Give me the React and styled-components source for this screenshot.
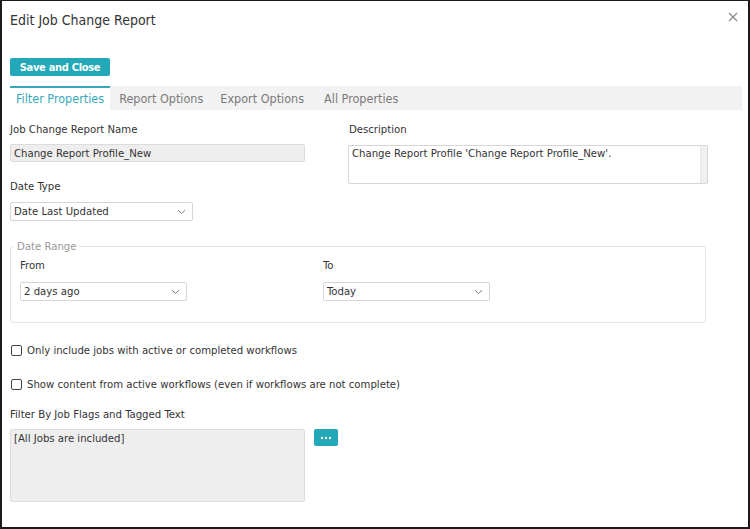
import React from "react";
import styled, { createGlobalStyle } from "styled-components";

const Global = createGlobalStyle`
  html, body { margin: 0; padding: 0; background: #fff; }
  * { box-sizing: border-box; }
  body { font-family: "DejaVu Sans", Tahoma, sans-serif; font-stretch: condensed; }
`;

const Frame = styled.div`
  width: 750px;
  height: 529px;
  border: 2px solid #1b1b1b;
  border-top-width: 1px;
  background: #fff;
  color: #333;
  font-size: 11.25px;
  padding: 0 6px 0 8px;
  display: flex;
  flex-direction: column;
`;

const Header = styled.div`
  display: flex;
  align-items: center;
  justify-content: space-between;
  height: 38px;
`;

const Title = styled.h1`
  margin: 0;
  font-weight: normal;
  font-size: 14px;
  color: #333;
`;

const Close = styled.button`
  border: 0;
  background: none;
  padding: 0;
  margin-right: 4px;
  margin-top: -6px;
  cursor: pointer;
  display: flex;
`;

const TealButton = styled.button`
  border: 0;
  border-radius: 2px;
  background: #22a8b8;
  color: #fff;
  font-family: inherit;
  font-stretch: condensed;
  font-weight: bold;
  font-size: 11px;
  letter-spacing: -0.3px;
  height: ${(p) => p.$h || 18}px;
  width: ${(p) => p.$w}px;
  padding: 0;
  display: flex;
  align-items: center;
  justify-content: center;
`;

const Toolbar = styled.div`
  margin-top: 19px;
  display: flex;
`;

const Tabs = styled.div`
  margin-top: 10px;
  display: flex;
  background: #f2f2f2;
  height: 24px;
`;

const Tab = styled.div`
  height: 24px;
  display: flex;
  align-items: center;
  padding: 0 ${(p) => p.$pr ?? 9}px 1px ${(p) => p.$pl ?? 9}px;
  font-size: 12.5px;
  color: ${(p) => (p.$active ? "#35a9bb" : "#7a7a7a")};
  background: ${(p) => (p.$active ? "#fff" : "transparent")};
  border-top: 2px solid ${(p) => (p.$active ? "#35a9bb" : "transparent")};
`;

const Row = styled.div`
  display: flex;
  margin-top: ${(p) => p.$mt || 0}px;
`;

const Col = styled.div`
  display: flex;
  flex-direction: column;
  width: ${(p) => p.$w || "auto"};
  margin-top: ${(p) => p.$mt || 0}px;
  margin-left: ${(p) => p.$ml || 0}px;
`;

const Label = styled.div`
  color: #333;
  height: 15px;
  line-height: 15px;
  margin-bottom: ${(p) => p.$mb ?? 7}px;
`;

const ReadOnly = styled.div`
  width: ${(p) => p.$w}px;
  height: ${(p) => p.$h}px;
  background: #eee;
  border: 1px solid #dcdcdc;
  border-radius: 2px;
  padding: 1px 3px;
  color: #333;
  line-height: 15px;
`;

const TextArea = styled.div`
  width: 360px;
  height: 39px;
  margin-left: -1px;
  margin-top: 1px;
  border: 1px solid #d6d6d6;
  border-radius: 2px;
  display: flex;
  background: #fff;
`;

const TextAreaBody = styled.div`
  flex: 1;
  padding: 1px 3px;
  line-height: 14px;
`;

const ScrollTrack = styled.div`
  width: 7px;
  background: #f0f0f0;
  border-left: 1px solid #e6e6e6;
`;

const Select = styled.div`
  width: ${(p) => p.$w}px;
  height: 19px;
  border: 1px solid #d6d6d6;
  border-radius: 2px;
  display: flex;
  align-items: center;
  justify-content: space-between;
  padding: 0 6px 0 3px;
  color: #333;
`;

const Chevron = () => (
  <svg width="9" height="6" viewBox="0 0 9 6">
    <path d="M1 1.2 L4.5 4.5 L8 1.2" fill="none" stroke="#777" strokeWidth="1" />
  </svg>
);

const Fieldset = styled.fieldset`
  margin: 19px 36px 0 0;
  border: 1px solid #dfe5ea;
  border-radius: 3px;
  padding: 5px 9px 21px 9px;
  display: flex;
  gap: 136px;
`;

const Legend = styled.legend`
  padding: 0 3px;
  margin-left: -6px;
  color: #999;
`;

const CheckRow = styled.label`
  display: flex;
  align-items: center;
  gap: 5px;
  margin-top: ${(p) => p.$mt}px;
  margin-left: 1px;
  color: #333;
`;

const Box = styled.span`
  width: 11px;
  height: 11px;
  border: 1px solid #444;
  border-radius: 2px;
  background: #fff;
`;

const Dots = () => (
  <svg width="12" height="4" viewBox="0 0 12 4">
    <circle cx="2" cy="2" r="1.2" fill="#fff" />
    <circle cx="6" cy="2" r="1.2" fill="#fff" />
    <circle cx="10" cy="2" r="1.2" fill="#fff" />
  </svg>
);

export default function App() {
  return (
    <>
      <Global />
      <Frame>
        <Header>
          <Title>Edit Job Change Report</Title>
          <Close aria-label="close">
            <svg width="10" height="10" viewBox="0 0 10 10">
              <path d="M1 1 L9 9 M9 1 L1 9" stroke="#8a8a8a" strokeWidth="1.3" />
            </svg>
          </Close>
        </Header>
        <Toolbar>
          <TealButton $w={100}>Save and Close</TealButton>
        </Toolbar>
        <Tabs>
          <Tab $active $pl={6} $pr={6}>Filter Properties</Tab>
          <Tab $pl={9} $pr={9}>Report Options</Tab>
          <Tab $pl={8} $pr={10}>Export Options</Tab>
          <Tab $pl={10}>All Properties</Tab>
        </Tabs>
        <Row $mt={12}>
          <Col $w="339px">
            <Label>Job Change Report Name</Label>
            <ReadOnly $w={295} $h={18}>Change Report Profile_New</ReadOnly>
          </Col>
          <Col>
            <Label>Description</Label>
            <TextArea>
              <TextAreaBody>Change Report Profile 'Change Report Profile_New'.</TextAreaBody>
              <ScrollTrack />
            </TextArea>
          </Col>
        </Row>
        <Col $mt={-5}>
          <Label $mb={8}>Date Type</Label>
          <Select $w={183}>
            Date Last Updated <Chevron />
          </Select>
        </Col>
        <Fieldset>
          <Legend>Date Range</Legend>
          <Col>
            <Label $mb={9}>From</Label>
            <Select $w={167}>
              2 days ago <Chevron />
            </Select>
          </Col>
          <Col>
            <Label $mb={9}>To</Label>
            <Select $w={167}>
              Today <Chevron />
            </Select>
          </Col>
        </Fieldset>
        <CheckRow $mt={21}>
          <Box />
          Only include jobs with active or completed workflows
        </CheckRow>
        <CheckRow $mt={21}>
          <Box />
          Show content from active workflows (even if workflows are not complete)
        </CheckRow>
        <Col $mt={16}>
          <Label $mb={7}>Filter By Job Flags and Tagged Text</Label>
          <Row>
            <ReadOnly $w={295} $h={73}>[All Jobs are included]</ReadOnly>
            <Col $ml={9}>
              <TealButton $w={24} $h={17}>
                <Dots />
              </TealButton>
            </Col>
          </Row>
        </Col>
      </Frame>
    </>
  );
}
